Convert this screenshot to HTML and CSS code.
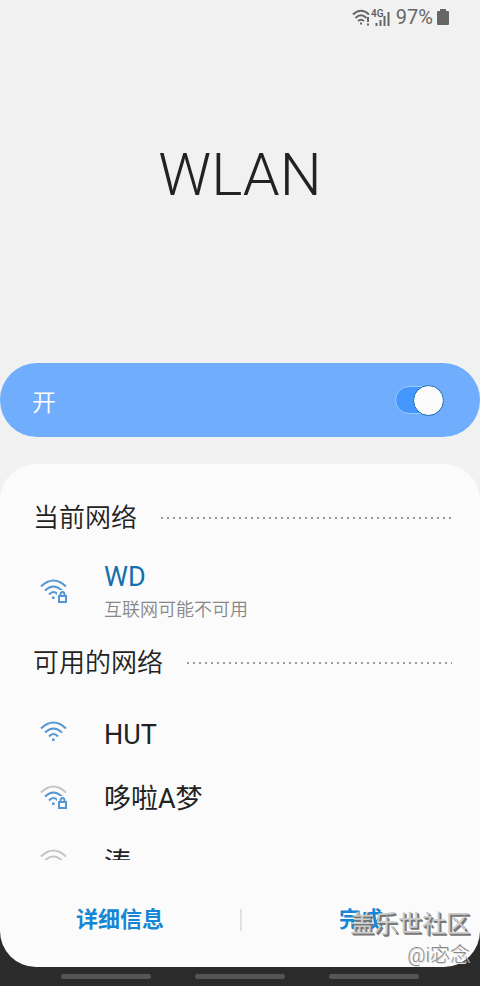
FILE: index.html
```html
<!DOCTYPE html>
<html lang="zh-CN">
<head>
<meta charset="utf-8">
<meta name="viewport" content="width=device-width, initial-scale=1">
<title>WLAN</title>
<link rel="stylesheet" href="styles.css">
</head>
<body>
<svg class="symbols" aria-hidden="true">
  <symbol id="arc-outer" viewBox="0 0 28 24"><path d="M1 7.500Q13.500 -4.500 26 7.500" /></symbol>
  <symbol id="arc-middle" viewBox="0 0 28 24"><path d="M5 11.500Q13.500 3.500 22 11.500" /></symbol>
  <symbol id="arc-inner" viewBox="0 0 28 24"><path d="M9 15.500Q13.500 10.500 18 15.500" /><rect class="dot" x="12" y="17.500" width="2.500" height="2.500" /></symbol>
  <symbol id="lock" viewBox="0 0 28 24"><path class="halo" d="M17 14l2-3h6l3 3v10H17z" /><path d="M19 17h7v6h-7zM20.500 17v-1.500a2 2.500 0 0 1 4 0V17" /></symbol>
</svg>
<div class="screen">
  <header class="status">
    <svg class="status-icons" viewBox="0 0 40 20" aria-hidden="true">
      <g class="status-wifi">
        <path d="M1 7.500Q9 0 17 7.500M3.500 11Q9 5.500 14.500 11M6 14Q9 11.500 12 14" />
        <path d="M8 16.500h2M16 10v5M16 16.500v2" />
      </g>
      <path class="bars" d="M24.500 16v3M28.500 13v6M32.500 9v10M36.500 5v14" />
      <text class="status-4g" x="19" y="10">4G</text>
    </svg>
    <span>97%</span>
    <svg class="battery" viewBox="0 0 12 17" aria-hidden="true"><path d="M3 0h6v2h2q1 0 1 1v12q0 1-1 1H1q-1 0-1-1V3q0-1 1-1h2z" /></svg>
  </header>
  <h1 class="title">WLAN</h1>
  <label class="master">
    <span>开</span>
    <input class="switch" type="checkbox" role="switch" checked>
  </label>
  <main class="panel">
    <div class="list">
      <h2 class="section">当前网络</h2>
      <a class="network current" href="#wd">
        <svg class="wifi" viewBox="0 0 28 24" aria-hidden="true"><use href="#arc-outer" /><use href="#arc-middle" /><use href="#arc-inner" /><use href="#lock" /></svg>
        <span class="names"><span class="name">WD</span><span class="note">互联网可能不可用</span></span>
      </a>
      <h2 class="section available">可用的网络</h2>
      <a class="network" href="#hut">
        <svg class="wifi" viewBox="0 0 28 24" aria-hidden="true"><use href="#arc-outer" /><use href="#arc-middle" /><use href="#arc-inner" /></svg>
        <span class="name">HUT</span>
      </a>
      <a class="network" href="#dlam">
        <svg class="wifi" viewBox="0 0 28 24" aria-hidden="true"><use class="weak" href="#arc-outer" /><use href="#arc-middle" /><use href="#arc-inner" /><use href="#lock" /></svg>
        <span class="name">哆啦A梦</span>
      </a>
      <a class="network" href="#tao">
        <svg class="wifi" viewBox="0 0 28 24" aria-hidden="true"><use class="weak" href="#arc-outer" /><use class="weak" href="#arc-middle" /><use href="#arc-inner" /></svg>
        <span class="name">涛</span>
      </a>
    </div>
    <footer class="actions">
      <button type="button">详细信息</button>
      <button type="button">完成</button>
    </footer>
  </main>
  <nav class="handles" aria-label="导航"><span></span><span></span><span></span></nav>
  <div class="watermark"><span class="community">盖乐世社区</span><span class="author">@i宓念</span></div>
</div>
</body>
</html>
```

FILE: styles.css
```css
* { box-sizing: border-box; }
body {
  margin: 0;
  background: #2b2b2b;
  color: #222;
  font-family: Roboto, "Noto Sans CJK SC", sans-serif;
}
.symbols { position: absolute; width: 0; height: 0; }
.screen {
  position: relative;
  display: flex;
  flex-direction: column;
  height: 100vh;
  background: linear-gradient(#f1f1f1 70%, #2b2b2b 70%);
}
.status {
  display: flex;
  align-items: center;
  justify-content: flex-end;
  gap: 4px;
  height: 34px;
  padding: 0 31px;
  color: #666;
  font-size: 20px;
}
.status-icons { width: 40px; height: 20px; }
.status-wifi, .bars { fill: none; stroke: #666; stroke-width: 2; }
.status-4g { fill: #555; font-size: 10px; font-weight: 500; }
.battery { width: 12px; height: 17px; fill: #666; }
.title {
  margin: 0;
  padding: 106px 0 153px;
  font-size: 59px;
  font-weight: 300;
  line-height: 70px;
  text-align: center;
}
.master {
  display: flex;
  flex: none;
  align-items: center;
  justify-content: space-between;
  height: 74px;
  margin-bottom: 27px;
  padding: 0 36px 0 32px;
  border-radius: 37px;
  background: #70adfc;
  color: #fff;
  font-size: 24px;
  font-weight: 350;
}
.switch {
  display: flex;
  align-items: center;
  justify-content: flex-end;
  width: 49px;
  height: 28px;
  margin: 0;
  border: 1px solid #9bcbff;
  border-radius: 14px;
  background: #4498fd;
  appearance: none;
}
.switch::before {
  flex: none;
  width: 29px;
  height: 29px;
  margin-right: -1px;
  border: 1px solid #1769b5;
  border-radius: 50%;
  background: #fbfbfb;
  content: "";
}
.panel {
  display: flex;
  flex: 1;
  flex-direction: column;
  min-height: 0;
  border-radius: 36px;
  background: #fbfbfb;
}
.list {
  flex: 1;
  min-height: 0;
  padding: 34px 28px 0 33px;
  overflow: hidden;
}
.section {
  display: flex;
  align-items: center;
  gap: 24px;
  margin: 0;
  font-size: 26px;
  font-weight: 350;
  line-height: 40px;
}
.section::after {
  flex: 1;
  height: 2px;
  background: repeating-linear-gradient(90deg, #999 0 2px, transparent 2px 6px);
  content: "";
}
.network {
  display: flex;
  align-items: center;
  gap: 36px;
  height: 64px;
  padding-left: 7px;
  color: #222;
  font-size: 27px;
  text-decoration: none;
}
.name { line-height: 38px; }
.network > .name { padding-top: 3px; }
.current { height: 105px; color: #146fae; }
.available { margin-bottom: 18px; }
.wifi {
  flex: none;
  width: 28px;
  height: 24px;
  fill: none;
  stroke: #5597d3;
  stroke-width: 2;
}
.weak { stroke: #c5c5c5; }
.dot { fill: #5597d3; stroke: none; }
.halo { fill: #fbfbfb; stroke: none; }
.names { display: flex; flex-direction: column; }
.note { color: #888; font-size: 18px; font-weight: 350; line-height: 28px; }
.actions {
  display: grid;
  grid-template-columns: 1fr 1fr;
  flex: none;
  height: 107px;
  padding: 49px 0 36px;
}
.actions button {
  padding: 0;
  border: 0;
  background: none;
  color: #1686d4;
  font: 700 22px/22px Roboto, "Noto Sans CJK SC", sans-serif;
}
.actions button + button { border-left: 2px solid #e2e2e2; }
.handles {
  display: flex;
  flex: none;
  align-items: center;
  justify-content: center;
  gap: 44px;
  height: 19px;
}
.handles span { width: 90px; height: 5px; border-radius: 3px; background: #555; }
.watermark {
  position: absolute;
  right: 10px;
  bottom: 17px;
  display: flex;
  flex-direction: column;
  align-items: flex-end;
  color: #ccc;
  text-shadow: 1px 1px #777;
  pointer-events: none;
}
.community { font-size: 24px; line-height: 34px; text-shadow: 1px 1px #777, 2px 2px #777; }
.author { color: #888; font-size: 20px; font-weight: 300; line-height: 28px; text-shadow: 1px 1px #ddd; }
```
